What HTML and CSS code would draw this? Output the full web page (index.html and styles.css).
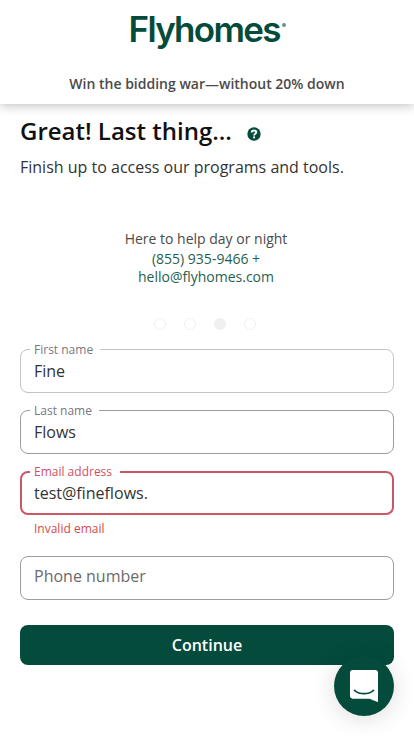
FILE: index.html
```html
<!DOCTYPE html>
<html lang="en">
<head>
    <meta charset="UTF-8">
    <meta name="viewport" content="width=device-width, initial-scale=1.0">
    <title>Flyhomes</title>
    <link rel="stylesheet" href="styles.css">
</head>
<body>
    <header class="header">
        <div class="logo">
            <span class="logo-text">Flyhomes</span>
            <span class="logo-mark"></span>
        </div>
        <p class="tagline">Win the bidding war—without 20% down</p>
    </header>

    <main class="content">
        <div class="title-row">
            <h1 class="title">Great! Last thing...</h1>
            <svg class="help-icon" width="14" height="14" viewBox="0 0 14 14">
                <circle cx="7" cy="7" r="6.7" fill="#044b3b"/>
                <path d="M4.7 5.500C4.800 4.200 5.700 3.500 7 3.500c1.400 0 2.300.7 2.300 1.800C9.300 6.800 7.100 6.700 7.100 8.400" fill="none" stroke="#fff" stroke-width="1.900"/>
                <circle cx="7.100" cy="10.400" r="1.100" fill="#fff"/>
            </svg>
        </div>
        <p class="subtitle">Finish up to access our programs and tools.</p>

        <div class="contact">
            <p class="contact-title">Here to help day or night</p>
            <a class="contact-link" href="tel:8559359466">(855) 935-9466 +</a>
            <a class="contact-link" href="mailto:hello@flyhomes.com">hello@flyhomes.com</a>
        </div>

        <div class="steps">
            <span class="step"></span>
            <span class="step"></span>
            <span class="step active"></span>
            <span class="step"></span>
        </div>

        <form class="form">
            <div class="field light">
                <label class="label" for="first-name">First name</label>
                <input class="input" type="text" id="first-name" value="Fine">
            </div>
            <div class="field">
                <label class="label" for="last-name">Last name</label>
                <input class="input" type="text" id="last-name" value="Flows">
            </div>
            <div class="field error">
                <label class="label" for="email">Email address</label>
                <input class="input" type="text" id="email" value="test@fineflows.">
            </div>
            <p class="error-text">Invalid email</p>
            <div class="field phone">
                <input class="input" type="text" id="phone" placeholder="Phone number">
            </div>
            <button class="continue" type="button">Continue</button>
        </form>
    </main>

    <!-- chat launcher -->
    <div class="chat">
        <svg width="28" height="32" viewBox="0 0 28 32">
            <path d="M28 32s-4.714-1.855-8.527-3.340H2.500C1.100 28.660 0 27.500 0 26.100V2.500C0 1.100 1.100 0 2.500 0h23C26.900 0 28 1.100 28 2.500z" fill="#fff"/>
            <path d="M4.500 20.300c5.200 4.500 13.800 4.500 19 0" fill="none" stroke="#044b3b" stroke-width="1.700" stroke-linecap="round"/>
        </svg>
    </div>
</body>
</html>
```
FILE: styles.css
```css
* {
    box-sizing: border-box;
}
body {
    margin: 0;
    height: 736px;
    overflow: hidden;
    background: #fff;
    font-family: 'Open Sans', sans-serif;
    color: #333;
}
p {
    margin: 0;
}
.header {
    height: 104px;
    padding-top: 7px;
    display: flex;
    flex-direction: column;
    align-items: center;
    box-shadow: 0 2px 10px rgba(0, 0, 0, 0.24);
}
.logo {
    display: flex;
    width: 157px;
    height: 44px;
}
.logo-text {
    font-family: Inter, sans-serif;
    font-size: 35px;
    line-height: 44px;
    font-weight: 600;
    letter-spacing: -1.7px;
    color: #044b3b;
}
.logo-mark {
    width: 4px;
    height: 4px;
    margin: 16px 0 0 2px;
    border-radius: 50%;
    background: #6f9389;
}
.tagline {
    margin-top: 23px;
    font-size: 14px;
    line-height: 20px;
    font-weight: 600;
    color: #4a4a4a;
}
.content {
    padding: 9px 20px 0;
}
.title-row {
    display: flex;
    align-items: center;
    gap: 15px;
    height: 36px;
}
.title {
    margin: 0;
    font-size: 24px;
    line-height: 36px;
    font-weight: 600;
    color: #111;
}
.help-icon {
    margin-top: 5px;
}
.subtitle {
    margin-top: 6px;
    font-size: 16px;
    line-height: 24px;
}
.contact {
    margin-top: 50px;
    padding-right: 2px;
    display: flex;
    flex-direction: column;
    align-items: center;
    font-size: 14px;
    line-height: 18px;
}
.contact-title {
    line-height: 20px;
    margin-bottom: 1px;
    color: #4a4a4a;
}
.contact-link {
    color: #1f6150;
    text-decoration: none;
}
.steps {
    display: flex;
    justify-content: center;
    gap: 18px;
    margin-top: 32px;
    padding-right: 4px;
}
.step {
    width: 12px;
    height: 12px;
    border: 1px solid #f1f1f1;
    border-radius: 50%;
}
.step.active {
    background: #f0f0f0;
}
.form {
    margin-top: 19px;
}
.field {
    position: relative;
    height: 44px;
    margin-bottom: 17px;
    border: 1px solid #9c9c9c;
    border-radius: 8px;
}
.field.light {
    border-color: #c4c4c4;
}
.field.error {
    border: 2px solid #c95866;
    margin-bottom: 5px;
}
/* the label sits on the border and cuts it */
.label {
    position: absolute;
    top: -8px;
    left: 9px;
    padding: 0 7px 0 4px;
    background: #fff;
    font-size: 12px;
    line-height: 16px;
    color: #77777f;
}
.error .label {
    top: -9px;
    left: 8px;
    padding-right: 8px;
    color: #d4505f;
}
.input {
    display: block;
    width: 100%;
    height: 100%;
    padding: 0 13px;
    border: none;
    border-radius: 8px;
    outline: none;
    background: transparent;
    font-family: inherit;
    font-size: 16px;
    color: #333;
}
.error .input {
    padding: 0 12px;
}
.phone .input {
    padding-bottom: 4px;
}
.input::placeholder {
    color: #6b6b6b;
    opacity: 1;
}
.error-text {
    padding-left: 14px;
    margin-bottom: 18px;
    font-size: 12px;
    line-height: 18px;
    color: #d64a4a;
}
.continue {
    display: block;
    width: 100%;
    height: 40px;
    margin-top: 25px;
    border: none;
    border-radius: 8px;
    background: #044b3b;
    color: #fff;
    font-family: inherit;
    font-size: 16px;
    font-weight: 600;
}
.chat {
    position: fixed;
    right: 20px;
    bottom: 20px;
    width: 60px;
    height: 60px;
    display: flex;
    align-items: center;
    justify-content: center;
    border-radius: 50%;
    background: #044b3b;
    box-shadow: 0 2px 24px rgba(0, 0, 0, 0.14);
}
```
